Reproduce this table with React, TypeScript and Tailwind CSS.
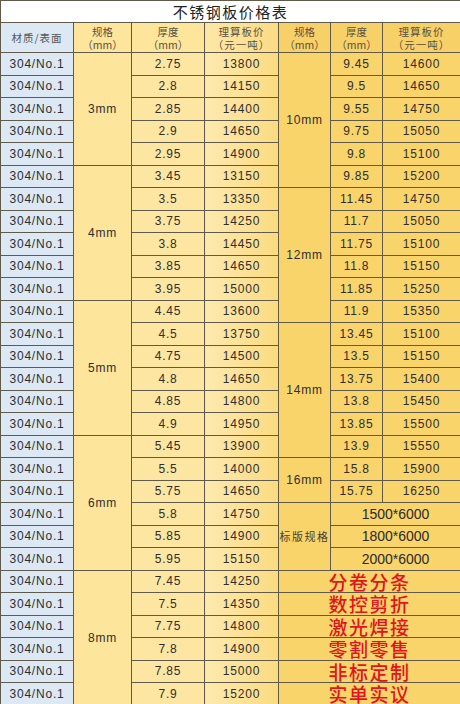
import React from "react";

type Group = { spec: string; rows: [string, string][] };

const leftGroups: Group[] = [
    { spec: "3mm", rows: [["2.75", "13800"], ["2.8", "14150"], ["2.85", "14400"], ["2.9", "14650"], ["2.95", "14900"]] },
    { spec: "4mm", rows: [["3.45", "13150"], ["3.5", "13350"], ["3.75", "14250"], ["3.8", "14450"], ["3.85", "14650"], ["3.95", "15000"]] },
    { spec: "5mm", rows: [["4.45", "13600"], ["4.5", "13750"], ["4.75", "14500"], ["4.8", "14650"], ["4.85", "14800"], ["4.9", "14950"]] },
    { spec: "6mm", rows: [["5.45", "13900"], ["5.5", "14000"], ["5.75", "14650"], ["5.8", "14750"], ["5.85", "14900"], ["5.95", "15150"]] },
    { spec: "8mm", rows: [["7.45", "14250"], ["7.5", "14350"], ["7.75", "14800"], ["7.8", "14900"], ["7.85", "15000"], ["7.9", "15200"]] },
];

const rightGroups: Group[] = [
    { spec: "10mm", rows: [["9.45", "14600"], ["9.5", "14650"], ["9.55", "14750"], ["9.75", "15050"], ["9.8", "15100"], ["9.85", "15200"]] },
    { spec: "12mm", rows: [["11.45", "14750"], ["11.7", "15050"], ["11.75", "15100"], ["11.8", "15150"], ["11.85", "15250"], ["11.9", "15350"]] },
    { spec: "14mm", rows: [["13.45", "15100"], ["13.5", "15150"], ["13.75", "15400"], ["13.8", "15450"], ["13.85", "15500"], ["13.9", "15550"]] },
    { spec: "16mm", rows: [["15.8", "15900"], ["15.75", "16250"]] },
];

const boards = ["1500*6000", "1800*6000", "2000*6000"];
const services = ["分卷分条", "数控剪折", "激光焊接", "零割零售", "非标定制", "实单实议"];

const td = "border border-[#5f5a4a] p-0 text-center align-middle";
const num = "font-['Liberation_Sans','Noto_Sans_CJK_SC',sans-serif] text-[12px] leading-none tracking-[0.8px] text-[#2e2e2e]";
const head = "font-['Noto_Sans_CJK_SC',sans-serif] text-[10.5px] leading-[13px] text-[#5a5040]";

function rightCells(i: number) {
    // cells of the right half that sit on data row i
    let idx = 0;
    for (const g of rightGroups) {
        for (let r = 0; r < g.rows.length; r++) {
            if (idx === i) {
                return (
                    <>
                        {r === 0 && <td rowSpan={g.rows.length} className={`${td} bg-[#f9d46b] ${num} text-[11px]`}>{g.spec}</td>}
                        <td className={`${td} bg-[#f9d46b] ${num}`}>{g.rows[r][0]}</td>
                        <td className={`${td} bg-[#f9d46b] ${num}`}>{g.rows[r][1]}</td>
                    </>
                );
            }
            idx++;
        }
    }
    const b = i - idx;
    if (b >= 0 && b < boards.length) {
        return (
            <>
                {b === 0 && (
                    <td rowSpan={3} className={`${td} whitespace-nowrap bg-[#f9d46b] font-['Noto_Sans_CJK_SC',sans-serif] text-[11px] tracking-[1.5px] text-[#4a4030]`}>标版规格</td>
                )}
                <td colSpan={2} className={`${td} bg-[#f9d46b] font-['Liberation_Sans',sans-serif] text-[14px] leading-none text-[#2a2a2a]`}>{boards[b]}</td>
            </>
        );
    }
    const s = b - boards.length;
    return (
        <td colSpan={3} className={`${td} bg-[#f9d46b] font-['Noto_Sans_CJK_SC',sans-serif] text-[19px] font-medium leading-none tracking-[1.5px] text-[#e3141b]`}>
            {services[s]}
        </td>
    );
}

export default function App() {
    let rowIndex = 0;
    return (
        <div className="h-[704px] w-[460px] overflow-hidden bg-white">
            <table className="w-[460px] table-fixed border-collapse">
                <colgroup>
                    <col className="w-[73px]" />
                    <col className="w-[58px]" />
                    <col className="w-[73px]" />
                    <col className="w-[74px]" />
                    <col className="w-[52px]" />
                    <col className="w-[52px]" />
                    <col className="w-[78px]" />
                </colgroup>
                <tbody>
                    <tr className="h-[22px]">
                        <td colSpan={7} className={`${td} bg-white font-['Noto_Sans_CJK_SC',sans-serif] text-[15px] leading-none tracking-[1.5px] text-[#222]`}>不锈钢板价格表</td>
                    </tr>
                    <tr className="h-[30px]">
                        <td className={`${td} bg-[#dce9f5] ${head} tracking-[1px] text-[#555]`}>材质/表面</td>
                        <td className={`${td} bg-[#fde59c] ${head}`}>规格<br />（mm）</td>
                        <td className={`${td} bg-[#fde59c] ${head}`}>厚度<br />（mm）</td>
                        <td className={`${td} bg-gradient-to-r from-[#fde7a6] to-[#fbdc84] ${head} tracking-[1px]`}>理算板价<br />（元一吨）</td>
                        <td className={`${td} bg-[#f8d068] ${head}`}>规格<br />（mm）</td>
                        <td className={`${td} bg-[#f8d068] ${head}`}>厚度<br />（mm）</td>
                        <td className={`${td} bg-[#f8d068] ${head} tracking-[1px]`}>理算板价<br />（元一吨）</td>
                    </tr>
                    {leftGroups.map((g) =>
                        g.rows.map(([thick, price], r) => {
                            const i = rowIndex++;
                            return (
                                <tr key={`${g.spec}-${thick}`} className="h-[22.5px]">
                                    <td className={`${td} bg-[#dce9f5] ${num}`}>304/No.1</td>
                                    {r === 0 && <td rowSpan={g.rows.length} className={`${td} bg-[#fde59c] ${num} text-[11px]`}>{g.spec}</td>}
                                    <td className={`${td} bg-[#fde6a2] ${num}`}>{thick}</td>
                                    <td className={`${td} bg-gradient-to-r from-[#fde9ae] to-[#fbdb80] ${num}`}>{price}</td>
                                    {rightCells(i)}
                                </tr>
                            );
                        })
                    )}
                </tbody>
            </table>
        </div>
    );
}
